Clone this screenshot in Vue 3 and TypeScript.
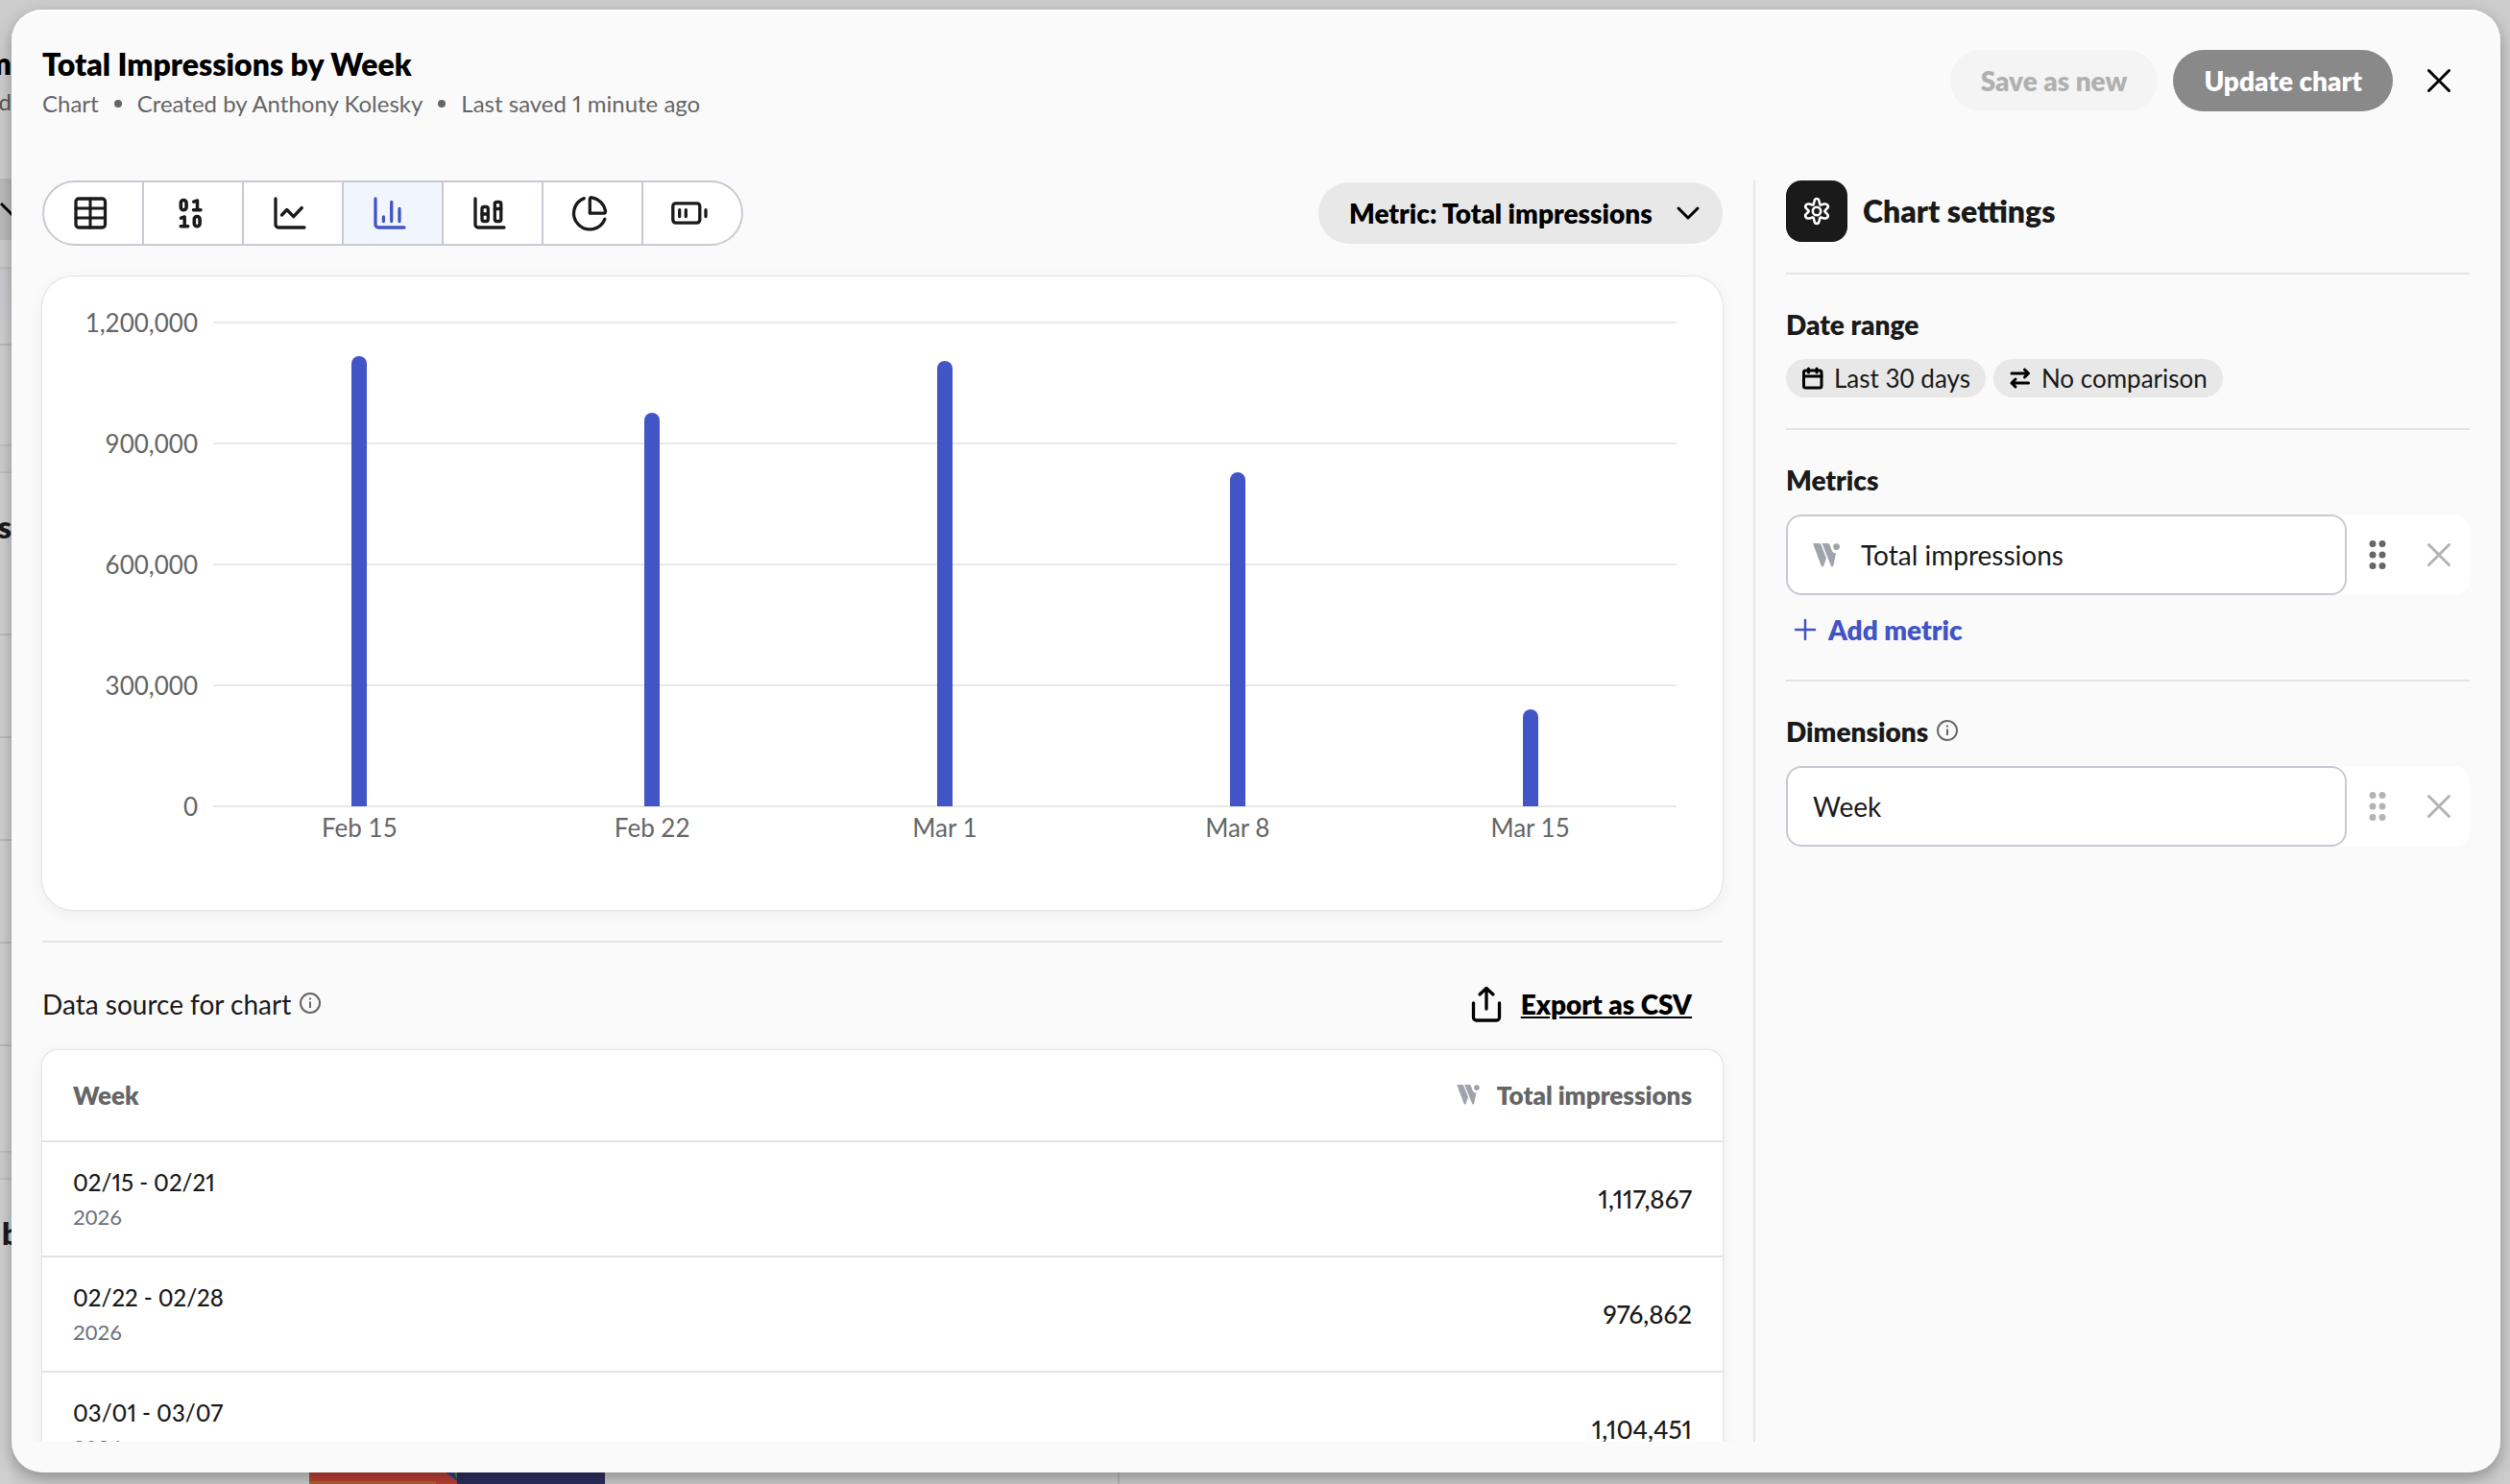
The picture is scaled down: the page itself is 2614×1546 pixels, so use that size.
<script setup lang="ts">
import { computed, ref } from 'vue'

interface WeekRow {
  tick: string
  range: string
  year: string
  value: number
}

type ChartKind = 'table' | 'number' | 'line' | 'bar' | 'stacked' | 'pie' | 'gauge'

const kinds: { id: ChartKind; label: string }[] = [
  { id: 'table', label: 'Table' },
  { id: 'number', label: 'Number' },
  { id: 'line', label: 'Line chart' },
  { id: 'bar', label: 'Bar chart' },
  { id: 'stacked', label: 'Stacked bar chart' },
  { id: 'pie', label: 'Pie chart' },
  { id: 'gauge', label: 'Gauge' },
]

const selected = ref<ChartKind>('bar')
const metric = ref('impressions')
const metricField = ref('Total impressions')
const dimensionField = ref('Week')

const rows: WeekRow[] = [
  { tick: 'Feb 15', range: '02/15 - 02/21', year: '2026', value: 1117867 },
  { tick: 'Feb 22', range: '02/22 - 02/28', year: '2026', value: 976862 },
  { tick: 'Mar 1', range: '03/01 - 03/07', year: '2026', value: 1104451 },
  { tick: 'Mar 8', range: '03/08 - 03/14', year: '2026', value: 829140 },
  { tick: 'Mar 15', range: '03/15 - 03/21', year: '2026', value: 241300 },
]

const axisMax = 1200000
const ticks = [1200000, 900000, 600000, 300000, 0]
const format = (n: number): string => n.toLocaleString('en-US')
const bars = computed(() => rows.map((r) => ({ tick: r.tick, height: `${(r.value / axisMax) * 100}%` })))
</script>

<template>
  <div class="page">
    <div class="backdrop" aria-hidden="true">
      <div class="strip">
        <div class="s-title">m</div>
        <div class="s-sub">rd</div>
        <div class="s-pill">
          <svg width="24" height="16" viewBox="0 0 24 16"><path d="M1 2l11 11L23 2" fill="none" stroke="#000" stroke-width="3" /></svg>
        </div>
        <div class="s-card first"><i class="tint"></i><i></i></div>
        <div class="s-card second"><b>s</b><i></i><i></i><i></i><i></i><i></i></div>
        <div class="s-card third"><b>b</b></div>
      </div>
      <div class="peek">
        <svg class="art" width="308" height="14" viewBox="0 0 308 14">
          <path d="M0 0h154v14H0z" fill="#bb4034" />
          <path d="M0 11h132v3H0z" fill="#a8662c" />
          <path d="M140 0h14v11z" fill="#2f3d86" />
          <path d="M150 0h4v9z" fill="#4d8a3c" />
          <path d="M154 0h154v14H154z" fill="#2b2f5b" />
        </svg>
        <i class="peek-line"></i>
      </div>
    </div>

    <section class="dialog" role="dialog" aria-labelledby="title">
      <header class="head">
        <div class="heading">
          <h1 id="title">Total Impressions by Week</h1>
          <p class="meta"><span>Chart</span><i class="dot"></i><span>Created by Anthony Kolesky</span><i class="dot"></i><span>Last saved 1 minute ago</span></p>
        </div>
        <div class="actions">
          <button type="button" class="btn ghost" disabled>Save as new</button>
          <button type="button" class="btn solid">Update chart</button>
          <button type="button" class="close" aria-label="Close">
            <svg width="24" height="24" viewBox="0 0 24 24"><path d="M1.500 1.500l21 21M22.500 1.500l-21 21" fill="none" stroke="#000" stroke-width="3" stroke-linecap="round" /></svg>
          </button>
        </div>
      </header>

      <div class="body">
        <main class="main">
          <div class="toolbar">
            <div class="kinds" role="group" aria-label="Chart type">
              <button
                v-for="k in kinds"
                :key="k.id"
                type="button"
                class="kind"
                :class="{ on: k.id === selected }"
                :aria-label="k.label"
                :aria-pressed="k.id === selected"
                @click="selected = k.id"
              >
                <svg width="40" height="40" viewBox="0 0 40 40" fill="none" stroke="currentColor" stroke-width="3.3" stroke-linecap="round" stroke-linejoin="round">
                  <template v-if="k.id === 'table'">
                    <rect x="5" y="5" width="30.500" height="30" rx="3" />
                    <path d="M20 5v30M5 15h30M5 25h30" stroke-width="3" />
                  </template>
                  <template v-else-if="k.id === 'number'">
                    <rect x="10.300" y="6.500" width="5.800" height="10.300" rx="2.900" stroke-width="3.600" />
                    <path d="M23.800 8.200l3.700-1.200v9.700M23.500 16.800h7.500M10.500 25.200l3.700-1.200v9.700M10.200 33.800h7.500" stroke-width="3.500" />
                    <rect x="24.300" y="23.500" width="5.800" height="10.300" rx="2.900" stroke-width="3.600" />
                  </template>
                  <template v-else-if="k.id === 'line'">
                    <path d="M5 5v27a3 3 0 0 0 3 3h27" />
                    <path d="M11.500 22l5.300-5.500 6.900 7.200 8.600-9.200" />
                  </template>
                  <template v-else-if="k.id === 'bar'">
                    <path d="M5 5v27a3 3 0 0 0 3 3h27" />
                    <path d="M13.400 24v4.500M21.700 8.500v20M30 15.500v13" />
                  </template>
                  <template v-else-if="k.id === 'stacked'">
                    <path d="M5 5v27a3 3 0 0 0 3 3h27" />
                    <rect x="12" y="13.500" width="6.300" height="15" rx="2" />
                    <rect x="25.300" y="8.500" width="6.500" height="20" rx="2" />
                    <path d="M12 21h6M25.300 15.500h6.500" />
                  </template>
                  <template v-else-if="k.id === 'pie'">
                    <path d="M20.300 20.200V5.500c0-1.300.8-2 2-1.700 7.500 1.300 13 7 14.200 14.300.2 1.300-.5 2.100-1.700 2.100z" />
                    <path d="M14.300 4.600A16.700 16.700 0 1 0 35.800 26.300" />
                  </template>
                  <template v-else>
                    <rect x="2.800" y="9.800" width="28" height="20.300" rx="3" />
                    <path d="M9.700 16.700v6.800M16.300 16.700v6.800M37 16.700v6.800" />
                  </template>
                </svg>
              </button>
            </div>
            <div class="metric">
              <select v-model="metric" aria-label="Metric">
                <option value="impressions">Metric: Total impressions</option>
              </select>
              <svg width="24" height="14" viewBox="0 0 24 14"><path d="M2 2l10 10L22 2" fill="none" stroke="#000" stroke-width="3" stroke-linecap="round" stroke-linejoin="round" /></svg>
            </div>
          </div>

          <figure class="card chart" aria-label="Total impressions by week">
            <div class="yaxis"><span v-for="t in ticks" :key="t">{{ format(t) }}</span></div>
            <div class="plot">
              <div class="lines"><i v-for="t in ticks" :key="t"></i></div>
              <div class="bars">
                <div v-for="b in bars" :key="b.tick" class="slot"><div class="bar" :style="{ height: b.height }"></div></div>
              </div>
            </div>
            <div class="xaxis"><span v-for="b in bars" :key="b.tick">{{ b.tick }}</span></div>
          </figure>

          <div class="source">
            <h2 class="source-title">
              Data source for chart
              <svg class="info" width="24" height="24" viewBox="0 0 24 24"><circle cx="12" cy="11" r="10" fill="none" stroke="#666" stroke-width="2" /><path d="M12 9.500v6.500M12 5.500v2" stroke="#666" stroke-width="2" /></svg>
            </h2>
            <a class="export" href="#">
              <svg width="32" height="38" viewBox="0 0 32 38" fill="none" stroke="#000" stroke-width="3.300" stroke-linecap="round" stroke-linejoin="round"><path d="M2.500 18v15a3 3 0 0 0 3 3h21a3 3 0 0 0 3-3V18M16 24V2.500M9 9l7-6.500L23 9" /></svg>
              <span>Export as CSV</span>
            </a>
          </div>

          <div class="card tablecard">
            <table>
              <thead>
                <tr>
                  <th scope="col">Week</th>
                  <th scope="col" class="num">
                    <span class="th-metric">
                      <svg width="24" height="21" viewBox="0 0 28 25" fill="#a0a3aa"><path d="M0 0h6.500q1.500 0 2 1.500L14 15.500l-2.700 8q-1.300 2-2.600 0z" /><path d="M9.500 0h6q1.500 0 2 1.500L19.500 7q1 3 4.500 3.500L21.500 23q-1.300 2.500-2.600.5z" /><circle cx="24.600" cy="3.600" r="3.400" /></svg>
                      Total impressions
                    </span>
                  </th>
                </tr>
              </thead>
              <tbody>
                <tr v-for="r in rows" :key="r.tick">
                  <td><div class="range">{{ r.range }}</div><div class="year">{{ r.year }}</div></td>
                  <td class="num">{{ format(r.value) }}</td>
                </tr>
              </tbody>
            </table>
          </div>
        </main>

        <aside class="side">
          <div class="side-head">
            <span class="gear">
              <svg width="28" height="30" viewBox="0 0 28 30" fill="none" stroke="#fff" stroke-width="2.600" stroke-linejoin="round">
                <path d="M11.500 4.500Q12 2 14 2t2.500 2.500L17.300 8q.4.700 1.200.500l3.200-.9q2.500-.6 3.700 1.200t-.6 3.400L22.500 14.500q-.4.500 0 1l2.300 2.300q1.600 1.600.6 3.400t-3.700 1.200l-3.200-.9q-.8-.2-1.200.5l-.8 3.500Q16 28 14 28t-2.500-2.500L10.700 22q-.4-.7-1.200-.5l-3.200.9q-2.500.6-3.700-1.200t.6-3.400L5.500 15.500q.4-.5 0-1L3.200 12.200q-1.600-1.600-.6-3.400T6.300 7.600l3.200.9q.8.200 1.200-.5z" />
                <circle cx="14" cy="15" r="4.200" />
              </svg>
            </span>
            <h2>Chart settings</h2>
          </div>

          <section class="group">
            <h3>Date range</h3>
            <div class="chips">
              <button type="button" class="chip">
                <svg width="24" height="24" viewBox="0 0 24 24" fill="none" stroke="#000" stroke-width="3" stroke-linecap="round" stroke-linejoin="round"><rect x="2.500" y="4" width="18.500" height="18" rx="2" /><path d="M3 10h18M7.500 2v4M16 2v4" /></svg>
                Last 30 days
              </button>
              <button type="button" class="chip">
                <svg width="24" height="24" viewBox="0 0 24 24" fill="none" stroke="#000" stroke-width="3" stroke-linecap="round" stroke-linejoin="round"><path d="M3 7h17M16.500 3L20.500 7l-4 4M20.500 17h-17M7 13l-4 4 4 4" /></svg>
                No comparison
              </button>
            </div>
          </section>

          <section class="group">
            <h3><label for="metric-field">Metrics</label></h3>
            <div class="field">
              <div class="box">
                <svg width="28" height="25" viewBox="0 0 28 25" fill="#a0a3aa"><path d="M0 0h6.500q1.500 0 2 1.500L14 15.500l-2.700 8q-1.300 2-2.600 0z" /><path d="M9.500 0h6q1.500 0 2 1.500L19.500 7q1 3 4.500 3.500L21.500 23q-1.300 2.500-2.600.5z" /><circle cx="24.600" cy="3.600" r="3.400" /></svg>
                <input id="metric-field" v-model="metricField" type="text" />
              </div>
              <button type="button" class="tool dark" aria-label="Reorder metric">
                <svg width="18" height="32" viewBox="0 0 18 32" fill="currentColor"><circle v-for="n in 6" :key="n" :cx="n % 2 ? 4 : 14" :cy="4.5 + Math.floor((n - 1) / 2) * 11.5" r="3.500" /></svg>
              </button>
              <button type="button" class="tool" aria-label="Remove metric">
                <svg width="24" height="24" viewBox="0 0 24 24"><path d="M1.500 1.500l21 21M22.500 1.500l-21 21" fill="none" stroke="currentColor" stroke-width="3" stroke-linecap="round" /></svg>
              </button>
            </div>
            <button type="button" class="add">
              <svg width="24" height="24" viewBox="0 0 24 24"><path d="M12 2v20M2 12h20" fill="none" stroke="currentColor" stroke-width="2.500" stroke-linecap="round" /></svg>
              Add metric
            </button>
          </section>

          <section class="group">
            <h3>
              <label for="dimension-field">Dimensions</label>
              <svg class="info" width="24" height="24" viewBox="0 0 24 24"><circle cx="12" cy="11" r="10" fill="none" stroke="#666" stroke-width="2" /><path d="M12 9.500v6.500M12 5.500v2" stroke="#666" stroke-width="2" /></svg>
            </h3>
            <div class="field">
              <div class="box">
                <input id="dimension-field" v-model="dimensionField" type="text" />
              </div>
              <button type="button" class="tool" aria-label="Reorder dimension">
                <svg width="18" height="32" viewBox="0 0 18 32" fill="currentColor"><circle v-for="n in 6" :key="n" :cx="n % 2 ? 4 : 14" :cy="4.5 + Math.floor((n - 1) / 2) * 11.5" r="3.500" /></svg>
              </button>
              <button type="button" class="tool" aria-label="Remove dimension">
                <svg width="24" height="24" viewBox="0 0 24 24"><path d="M1.500 1.500l21 21M22.500 1.500l-21 21" fill="none" stroke="currentColor" stroke-width="3" stroke-linecap="round" /></svg>
              </button>
            </div>
          </section>
        </aside>
      </div>
    </section>
  </div>
</template>

<style>
body {
  background: #cccccc;
}
</style>

<style scoped>
* {
  box-sizing: border-box;
}

.page {
  position: relative;
  height: 100vh;
  padding: 10px 10px 12px 12px;
  overflow: hidden;
  background: #cccccc;
  color: #1a1a1a;
  font-family: Lato, "Liberation Sans", sans-serif;
  font-size: 28px;
  line-height: 40px;
}

h1, h2, h3, p, figure {
  margin: 0;
}

h1, h2, h3, th, b {
  font-weight: 800;
}

button, input, select {
  margin: 0;
  padding: 0;
  border: 0;
  background: none;
  color: inherit;
  font: inherit;
}

svg {
  flex: none;
  display: block;
  overflow: visible;
}

/* page behind the dialog */
.backdrop {
  position: absolute;
  inset: 0;
  display: flex;
  flex-direction: column;
  justify-content: space-between;
}

.strip {
  width: 12px;
  padding-top: 46px;
  overflow: hidden;
}

.s-title, .s-sub {
  display: flex;
  justify-content: flex-end;
  font-weight: 800;
  font-size: 32px;
  color: #000;
}

.s-sub {
  margin-bottom: 60px;
  font-weight: 400;
  font-size: 24px;
  color: #555;
}

.s-pill {
  display: flex;
  align-items: center;
  justify-content: flex-end;
  height: 64px;
  margin-bottom: 30px;
  background: #bababa;
}

.s-pill svg {
  margin-right: -12px;
}

.s-card {
  margin-bottom: 30px;
  background: #cfcfcf;
  box-shadow: 0 0 2px 1px #b4b4b4;
}

.s-card i {
  display: block;
  height: 107px;
  border-bottom: 2px solid #b9b9b9;
}

.s-card.first i:last-child {
  height: 103px;
  border: 0;
}

.s-card.second i:last-child {
  height: 109px;
  border: 0;
}

.s-card .tint {
  height: 80px;
  background: linear-gradient(#c8c8d0, #cfcfcf);
}

.s-card b {
  display: flex;
  justify-content: flex-end;
  height: 169px;
  padding-top: 36px;
  border-bottom: 2px solid #b9b9b9;
  font-size: 32px;
}

.s-card.third {
  height: 400px;
  margin-bottom: 0;
}

.s-card.third b {
  justify-content: flex-start;
  padding-left: 2px;
  border: 0;
}

.peek {
  position: absolute;
  inset: auto 0 0 322px;
  display: flex;
  gap: 534px;
  height: 14px;
}

.peek-line {
  width: 2px;
  background: #b5b5b5;
}

/* dialog */
.dialog {
  position: relative;
  display: flex;
  flex-direction: column;
  height: 100%;
  padding: 32px;
  border-radius: 32px;
  background: #fafafa;
  box-shadow: 0 6px 16px rgba(0, 0, 0, 0.3), inset 0 2px 0 #fff;
}

.head {
  display: flex;
  justify-content: space-between;
  align-items: flex-start;
  height: 146px;
}

.heading {
  padding-top: 4px;
}

h1 {
  font-size: 32px;
  line-height: 42px;
  color: #000;
}

.meta {
  display: flex;
  align-items: center;
  gap: 16px;
  font-size: 24px;
  font-variant-numeric: proportional-nums;
  line-height: 40px;
  color: #666;
}

.dot {
  width: 8px;
  height: 8px;
  border-radius: 4px;
  background: #666;
}

.actions {
  display: flex;
  gap: 16px;
  padding-top: 10px;
}

.btn {
  height: 64px;
  padding: 0 32px;
  border-radius: 32px;
  font-weight: 800;
}

.ghost {
  background: #f4f4f4;
  color: #b0b0b0;
}

.solid {
  background: #898989;
  color: #fff;
}

.close, .tool {
  display: flex;
  align-items: center;
  justify-content: center;
  width: 64px;
  height: 64px;
}

.body {
  flex: 1;
  display: flex;
  min-height: 0;
}

.main {
  flex: 1;
  min-width: 0;
  margin-left: -32px;
  padding: 0 32px;
  overflow: hidden;
}

.toolbar {
  display: flex;
  align-items: center;
  justify-content: space-between;
  margin-bottom: 32px;
}

.kinds {
  display: flex;
  border: 2px solid #c6cad2;
  border-radius: 34px;
  background: #fff;
  overflow: hidden;
}

.kind {
  height: 64px;
  padding: 0 34px 0 28px;
}

.kind + .kind {
  border-left: 2px solid #c6cad2;
}

.kind.on {
  background: #f1f5fe;
  color: #4255c6;
}

.metric {
  display: flex;
  align-items: center;
  height: 64px;
  border-radius: 32px;
  background: #e8e8e8;
}

.metric select {
  height: 64px;
  padding: 0 48px 0 32px;
  border-radius: 32px;
  font-weight: 800;
  color: #000;
  appearance: none;
}

.metric svg {
  margin: 0 24px 0 -24px;
  pointer-events: none;
}

.card {
  border-radius: 16px;
  background: #fff;
  box-shadow: 0 0 0 1px #e2e2e2, 0 4px 16px rgba(0, 0, 0, 0.06);
}

.chart {
  display: grid;
  grid-template: 504px 44px / 130px 1fr;
  column-gap: 16px;
  height: 660px;
  padding: 48px 48px 0 32px;
  border-radius: 32px;
  font-size: 26px;
  color: #666;
}

.yaxis {
  display: flex;
  flex-direction: column;
  justify-content: space-between;
  margin: -20px 0;
  text-align: right;
}

.plot {
  display: grid;
}

.lines, .bars {
  grid-area: 1 / 1;
}

.lines {
  display: flex;
  flex-direction: column;
  justify-content: space-between;
  margin: -1px 0;
}

.lines i {
  height: 2px;
  background: #e8e8e8;
}

.bars, .xaxis {
  display: grid;
  grid-template-columns: repeat(5, 1fr);
}

.slot {
  display: flex;
  align-items: flex-end;
  justify-content: center;
}

.bar {
  width: 16px;
  border-radius: 8px 8px 0 0;
  background: #4255c6;
}

.xaxis {
  grid-column: 2;
  padding-top: 2px;
  text-align: center;
}

.source {
  display: flex;
  align-items: center;
  justify-content: space-between;
  height: 114px;
  margin-top: 32px;
  padding: 16px 32px 0 0;
  border-top: 2px solid #e3e3e3;
}

.source-title {
  display: flex;
  align-items: center;
  gap: 8px;
  font-size: 28px;
  font-weight: 400;
}

.export {
  display: flex;
  align-items: center;
  gap: 20px;
  font-weight: 800;
  color: #000;
}

table {
  width: 100%;
  border-spacing: 0;
  font-size: 26px;
  font-variant-numeric: proportional-nums;
}

th {
  height: 94px;
  padding: 0 32px;
  text-align: left;
  color: #666;
}

td {
  height: 120px;
  padding: 0 32px;
  border-top: 2px solid #e3e3e3;
  font-weight: 500;
  line-height: 36px;
}

.num {
  text-align: right;
}

.th-metric {
  display: inline-flex;
  align-items: center;
  gap: 18px;
}

.range {
  padding-top: 2px;
  font-size: 24px;
}

.year {
  font-size: 22px;
  font-weight: 400;
  font-variant-numeric: tabular-nums;
  color: #6b7280;
}

/* settings */
.side {
  width: 746px;
  padding-left: 32px;
  border-left: 2px solid #e6e6e6;
}

.side-head {
  display: flex;
  gap: 16px;
  height: 96px;
}

.gear {
  display: flex;
  align-items: center;
  justify-content: center;
  width: 64px;
  height: 64px;
  border-radius: 16px;
  background: #1a1a1a;
}

h2 {
  font-size: 32px;
  line-height: 64px;
}

.group {
  padding: 32px 0;
  border-top: 2px solid #e3e3e3;
}

h3 {
  display: flex;
  align-items: center;
  gap: 8px;
  margin-bottom: 16px;
  font-size: 28px;
}

.chips {
  display: flex;
  gap: 8px;
}

.chip {
  display: flex;
  align-items: center;
  gap: 10px;
  height: 40px;
  padding: 0 16px;
  border-radius: 20px;
  background: #e8e8e8;
  font-size: 26px;
}

.field {
  display: flex;
  align-items: center;
  border-radius: 16px;
  background: #fff;
}

.box {
  flex: 1;
  display: flex;
  align-items: center;
  gap: 22px;
  min-width: 0;
  height: 84px;
  padding: 0 26px;
  border: 2px solid #c6cad2;
  border-radius: 16px;
}

.box input {
  flex: 1;
  min-width: 0;
  height: 64px;
}

.tool {
  color: #b3b3b3;
}

.tool.dark {
  color: #666;
}

.add {
  display: flex;
  align-items: center;
  gap: 12px;
  margin: 16px 0 0 8px;
  font-weight: 800;
  color: #4255c6;
}
</style>
